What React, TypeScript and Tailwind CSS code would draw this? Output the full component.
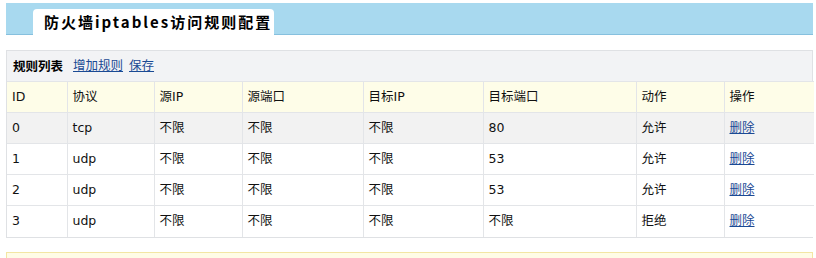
import React from "react";

const cols = [60, 87, 88, 121, 120, 153, 88, 90];
const headers = ["ID", "协议", "源IP", "源端口", "目标IP", "目标端口", "动作", "操作"];
const rows = [
  ["0", "tcp", "不限", "不限", "不限", "80", "允许"],
  ["1", "udp", "不限", "不限", "不限", "53", "允许"],
  ["2", "udp", "不限", "不限", "不限", "53", "允许"],
  ["3", "udp", "不限", "不限", "不限", "不限", "拒绝"],
];

export default function App() {
  return (
    <div
      className="w-[816px] h-[258px] overflow-hidden bg-white pt-[3px] pl-[6px] pr-[3px] text-[12.5px] text-[#111]"
      style={{ fontFamily: '"DejaVu Sans", "Noto Sans CJK SC", sans-serif' }}
    >
      <div className="h-[32px] bg-[#a8d9ef] border-b border-[#86c0de] flex items-end">
        <div
          className="ml-[27px] -mb-px w-[241px] h-[26px] bg-white rounded-t-[4px] pl-[11px] flex items-center font-bold text-[15px] tracking-[2px] text-black"
          style={{ fontFamily: '"Noto Sans CJK SC", sans-serif' }}
        >
          防火墙iptables访问规则配置
        </div>
      </div>

      <div className="mt-[15px] border border-[#dfe1e4] bg-[#f2f3f5]">
        <div className="h-[30px] flex items-center pl-[6px]">
          <span className="font-bold text-black" style={{ fontFamily: '"Noto Sans CJK SC", sans-serif' }}>规则列表</span>
          <a className="ml-[10px] text-[#1a4a94] underline cursor-pointer">增加规则</a>
          <a className="ml-[6px] text-[#1a4a94] underline cursor-pointer">保存</a>
        </div>
        <table className="w-full table-fixed border-collapse">
          <colgroup>
            {cols.map((w, i) => (
              <col key={i} style={{ width: w }} />
            ))}
          </colgroup>
          <thead>
            <tr className="h-[31px] bg-[#fefde8]">
              {headers.map((h, i) => (
                <td
                  key={i}
                  className={`border-t border-[#e3e5e8] pl-[5px] ${i > 0 ? "border-l" : ""}`}
                >
                  {h}
                </td>
              ))}
            </tr>
          </thead>
          <tbody>
            {rows.map((r, ri) => (
              <tr key={ri} className={`h-[31px] ${ri === 0 ? "bg-[#f2f2f2]" : "bg-white"}`}>
                {r.map((c, ci) => (
                  <td
                    key={ci}
                    className={`border-t border-[#e3e5e8] pl-[5px] ${ci > 0 ? "border-l" : ""}`}
                  >
                    {c}
                  </td>
                ))}
                <td className="border-t border-l border-[#e3e5e8] pl-[5px]">
                  <a className="text-[#1a4a94] underline cursor-pointer">删除</a>
                </td>
              </tr>
            ))}
          </tbody>
        </table>
      </div>

      <div className="mt-[14px] h-[30px] border border-[#f3e6a3] bg-[#fffce6]" />
    </div>
  );
}
